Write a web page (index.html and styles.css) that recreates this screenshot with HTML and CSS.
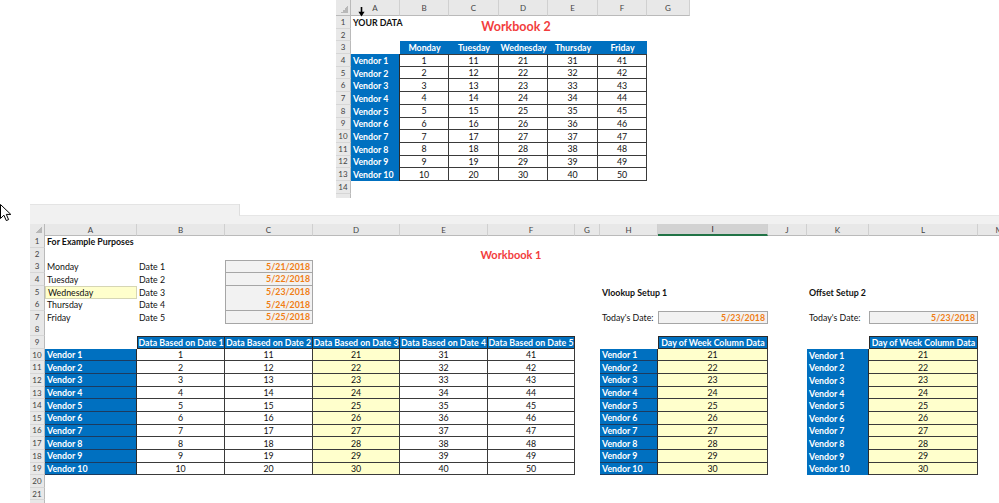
FILE: index.html
```html
<!DOCTYPE html>
<html lang="en">

<head>
    <meta charset="UTF-8">
    <meta name="viewport" content="width=device-width, initial-scale=1.0">
    <title>Workbook Lookup</title>
    <link rel="stylesheet" href="styles.css">
</head>

<body>
    <!-- Workbook 2: the source data -->
    <div class="sheet wb2">
        <svg class="colcursor" width="7" height="10" viewBox="0 0 7 10">
            <path d="M3.5 0 V6" stroke="#000" stroke-width="1.6" />
            <path d="M0.4 4.8 H6.6 L3.5 9.6 Z" fill="#000" />
        </svg>
        <div class="r hr">
            <div class="corner"></div>
            <div>A</div><div>B</div><div>C</div><div>D</div><div>E</div><div>F</div><div>G</div>
        </div>
        <div class="r"><div class="rn">1</div><div class="b">YOUR DATA</div><div></div><div class="title2"><span>Workbook 2</span></div></div>
        <div class="r"><div class="rn">2</div></div>
        <div class="r"><div class="rn">3</div><div></div><div class="hd">Monday</div><div class="hd">Tuesday</div><div class="hd">Wednesday</div><div class="hd">Thursday</div><div class="hd">Friday</div></div>
        <div class="r"><div class="rn">4</div><div class="vd">Vendor 1</div><div class="n t">1</div><div class="n t">11</div><div class="n t">21</div><div class="n t">31</div><div class="n t">41</div></div>
        <div class="r"><div class="rn">5</div><div class="vd">Vendor 2</div><div class="n">2</div><div class="n">12</div><div class="n">22</div><div class="n">32</div><div class="n">42</div></div>
        <div class="r"><div class="rn">6</div><div class="vd">Vendor 3</div><div class="n">3</div><div class="n">13</div><div class="n">23</div><div class="n">33</div><div class="n">43</div></div>
        <div class="r"><div class="rn">7</div><div class="vd">Vendor 4</div><div class="n">4</div><div class="n">14</div><div class="n">24</div><div class="n">34</div><div class="n">44</div></div>
        <div class="r"><div class="rn">8</div><div class="vd">Vendor 5</div><div class="n">5</div><div class="n">15</div><div class="n">25</div><div class="n">35</div><div class="n">45</div></div>
        <div class="r"><div class="rn">9</div><div class="vd">Vendor 6</div><div class="n">6</div><div class="n">16</div><div class="n">26</div><div class="n">36</div><div class="n">46</div></div>
        <div class="r"><div class="rn">10</div><div class="vd">Vendor 7</div><div class="n">7</div><div class="n">17</div><div class="n">27</div><div class="n">37</div><div class="n">47</div></div>
        <div class="r"><div class="rn">11</div><div class="vd">Vendor 8</div><div class="n">8</div><div class="n">18</div><div class="n">28</div><div class="n">38</div><div class="n">48</div></div>
        <div class="r"><div class="rn">12</div><div class="vd">Vendor 9</div><div class="n">9</div><div class="n">19</div><div class="n">29</div><div class="n">39</div><div class="n">49</div></div>
        <div class="r"><div class="rn">13</div><div class="vd">Vendor 10</div><div class="n">10</div><div class="n">20</div><div class="n">30</div><div class="n">40</div><div class="n">50</div></div>
        <div class="r"><div class="rn">14</div></div>
        <div class="r"><div class="rn"></div></div>
    </div>

    <div class="lower">
        <div class="gutter">
            <svg width="12" height="18" viewBox="0 0 12 18">
                <path d="M0.5 0.5 V14.5 L3.9 11.2 L6.3 16.6 L8.6 15.6 L6.3 10.4 H10.8 Z" fill="#fff" stroke="#000" stroke-width="1" stroke-linejoin="round" />
            </svg>
        </div>

        <!-- Workbook 1: lookup setups -->
        <div class="sheet wb1">
            <div class="bar">
                <div class="bar-l"></div>
                <div class="bar-r"><div class="blank"></div></div>
            </div>
            <div class="r hr">
                <div class="corner"></div>
                <div>A</div><div>B</div><div>C</div><div>D</div><div>E</div><div>F</div><div>G</div>
                <div>H</div><div class="sel">I</div><div>J</div><div>K</div><div>L</div><div class="edge">M</div>
            </div>
            <div class="r"><div class="rn">1</div><div class="b">For Example Purposes</div></div>
            <div class="r"><div class="rn">2</div><div></div><div></div><div></div><div></div><div class="title1"><span>Workbook 1</span></div></div>
            <div class="r"><div class="rn">3</div><div>Monday</div><div>Date 1</div><div class="dt t">5/21/2018</div></div>
            <div class="r"><div class="rn">4</div><div>Tuesday</div><div>Date 2</div><div class="dt">5/22/2018</div></div>
            <div class="r"><div class="rn">5</div><div class="wed">Wednesday</div><div>Date 3</div><div class="dt">5/23/2018</div><div></div><div></div><div></div><div></div><div class="b">Vlookup Setup 1</div><div></div><div></div><div class="b">Offset Setup 2</div></div>
            <div class="r"><div class="rn">6</div><div>Thursday</div><div>Date 4</div><div class="dt">5/24/2018</div></div>
            <div class="r"><div class="rn">7</div><div>Friday</div><div>Date 5</div><div class="dt">5/25/2018</div><div></div><div></div><div></div><div></div><div>Today's Date:</div><div class="dt t">5/23/2018</div><div></div><div>Today's Date:</div><div class="dt t">5/23/2018</div></div>
            <div class="r"><div class="rn">8</div></div>
            <div class="r"><div class="rn">9</div><div></div><div class="hd ln f">Data Based on Date 1</div><div class="hd ln">Data Based on Date 2</div><div class="hd ln">Data Based on Date 3</div><div class="hd ln">Data Based on Date 4</div><div class="hd ln">Data Based on Date 5</div><div></div><div></div><div class="hd ln f">Day of Week Column Data</div><div></div><div></div><div class="hd ln f">Day of Week Column Data</div></div>
            <div class="r"><div class="rn">10</div><div class="vd sep">Vendor 1</div><div class="n">1</div><div class="n">11</div><div class="n y">21</div><div class="n">31</div><div class="n">41</div><div></div><div class="vd sep">Vendor 1</div><div class="n y">21</div><div></div><div class="vd">Vendor 1</div><div class="n y">21</div></div>
            <div class="r"><div class="rn">11</div><div class="vd sep">Vendor 2</div><div class="n">2</div><div class="n">12</div><div class="n y">22</div><div class="n">32</div><div class="n">42</div><div></div><div class="vd sep">Vendor 2</div><div class="n y">22</div><div></div><div class="vd">Vendor 2</div><div class="n y">22</div></div>
            <div class="r"><div class="rn">12</div><div class="vd sep">Vendor 3</div><div class="n">3</div><div class="n">13</div><div class="n y">23</div><div class="n">33</div><div class="n">43</div><div></div><div class="vd sep">Vendor 3</div><div class="n y">23</div><div></div><div class="vd">Vendor 3</div><div class="n y">23</div></div>
            <div class="r"><div class="rn">13</div><div class="vd sep">Vendor 4</div><div class="n">4</div><div class="n">14</div><div class="n y">24</div><div class="n">34</div><div class="n">44</div><div></div><div class="vd sep">Vendor 4</div><div class="n y">24</div><div></div><div class="vd">Vendor 4</div><div class="n y">24</div></div>
            <div class="r"><div class="rn">14</div><div class="vd sep">Vendor 5</div><div class="n">5</div><div class="n">15</div><div class="n y">25</div><div class="n">35</div><div class="n">45</div><div></div><div class="vd sep">Vendor 5</div><div class="n y">25</div><div></div><div class="vd">Vendor 5</div><div class="n y">25</div></div>
            <div class="r"><div class="rn">15</div><div class="vd sep">Vendor 6</div><div class="n">6</div><div class="n">16</div><div class="n y">26</div><div class="n">36</div><div class="n">46</div><div></div><div class="vd sep">Vendor 6</div><div class="n y">26</div><div></div><div class="vd">Vendor 6</div><div class="n y">26</div></div>
            <div class="r"><div class="rn">16</div><div class="vd sep">Vendor 7</div><div class="n">7</div><div class="n">17</div><div class="n y">27</div><div class="n">37</div><div class="n">47</div><div></div><div class="vd sep">Vendor 7</div><div class="n y">27</div><div></div><div class="vd">Vendor 7</div><div class="n y">27</div></div>
            <div class="r"><div class="rn">17</div><div class="vd sep">Vendor 8</div><div class="n">8</div><div class="n">18</div><div class="n y">28</div><div class="n">38</div><div class="n">48</div><div></div><div class="vd sep">Vendor 8</div><div class="n y">28</div><div></div><div class="vd">Vendor 8</div><div class="n y">28</div></div>
            <div class="r"><div class="rn">18</div><div class="vd sep">Vendor 9</div><div class="n">9</div><div class="n">19</div><div class="n y">29</div><div class="n">39</div><div class="n">49</div><div></div><div class="vd sep">Vendor 9</div><div class="n y">29</div><div></div><div class="vd">Vendor 9</div><div class="n y">29</div></div>
            <div class="r"><div class="rn">19</div><div class="vd sep">Vendor 10</div><div class="n">10</div><div class="n">20</div><div class="n y">30</div><div class="n">40</div><div class="n">50</div><div></div><div class="vd sep">Vendor 10</div><div class="n y">30</div><div></div><div class="vd">Vendor 10</div><div class="n y">30</div></div>
            <div class="r"><div class="rn">20</div></div>
            <div class="r"><div class="rn">21</div></div>
            <div class="r"><div class="rn"></div></div>
        </div>
    </div>
</body>

</html>
```

FILE: styles.css
```css
body {
    margin: 0;
    width: 999px;
    height: 503px;
    overflow: hidden;
    background-color: #ffffff;
    color: #111111;
    font-family: Lato, "Liberation Sans", sans-serif;
    font-size: 8.8px;
}

.sheet {
    display: flex;
    flex-direction: column;
    overflow: hidden;
}

.wb2 {
    position: relative;
    margin-left: 336px;
    width: 354px;
    height: 198px;
}

.wb2 .r {
    grid-template-columns: 15px 49px 49px 50px 49px 50px 49px 43px;
    height: 12.7px;
}

.wb2 .hr {
    height: 16px;
}

.colcursor {
    position: absolute;
    left: 22px;
    top: 7px;
}

.lower {
    display: flex;
    margin-top: 6px;
}

.gutter {
    width: 30px;
    flex: none;
}

.wb1 {
    width: 969px;
    height: 299px;
}

.wb1 .r {
    grid-template-columns: 15px 92px 88px 88px 87px 88px 87px 25px 58px 110px 39px 62px 109px 40px;
    height: 12.65px;
}

.wb1 .hr {
    height: 11px;
}

.bar {
    display: flex;
    height: 20px;
    flex: none;
    background-color: #f1f1f1;
}

.bar-l {
    width: 209px;
    border-top: 1px solid #e4e4e4;
}

.bar-r {
    flex: 1;
}

.blank {
    height: 11px;
    background-color: #ffffff;
    border-left: 1px solid #dedede;
    border-bottom: 1px solid #e6e6e6;
}

/* rows and cells */
.r {
    display: grid;
    flex: none;
}

.r > div {
    display: flex;
    align-items: center;
    padding: 0 2px;
    min-width: 0;
    white-space: nowrap;
    box-sizing: border-box;
}

.hr > div {
    justify-content: center;
    background-color: #e8e8e8;
    color: #444444;
    font-size: 8px;
    border-right: 1px solid #d0d0d0;
    border-bottom: 1px solid #bababa;
}

.hr > .sel {
    background-color: #d2d2d2;
    color: #262626;
    border-bottom: 2px solid #217346;
}

.hr > .edge {
    justify-content: flex-end;
    padding-right: 14px;
}

.hr > .corner {
    background: #e8e8e8 linear-gradient(to bottom right, transparent 50%, #b8b8b8 50%) right 2px bottom 2px / 7px 7px no-repeat;
    border-right: 1px solid #bababa;
}

.rn {
    justify-content: center;
    background-color: #e8e8e8;
    color: #444444;
    font-size: 8px;
    border-right: 1px solid #bababa;
    border-bottom: 1px solid #d6d6d6;
}

.b {
    font-weight: bold;
}

.title2 {
    grid-column: span 3;
    justify-content: center;
    align-items: flex-end !important;
    padding-right: 17px !important;
    color: #f23d3d;
    font-weight: bold;
    font-size: 12.5px;
}

.title2 span {
    margin-bottom: -5px;
}

.title1 {
    grid-column: span 2;
    justify-content: center;
    padding-left: 49px !important;
    color: #f23d3d;
    font-weight: bold;
    font-size: 11px;
}

.hd {
    justify-content: center;
    background-color: #0070c0;
    color: #ffffff;
    font-weight: bold;
}

.hd.ln {
    border-top: 1px solid #2a2a2a;
    border-right: 1px solid #2a2a2a;
    border-bottom: 1px solid #2a2a2a;
}

.hd.f {
    border-left: 1px solid #2a2a2a;
}

.vd {
    background-color: #0070c0;
    color: #ffffff;
    font-weight: bold;
    border-right: 1px solid #2a2a2a;
}

.vd.sep {
    border-bottom: 1px solid #1d3b5e;
}

.n {
    justify-content: center;
    border-right: 1px solid #3a3a3a;
    border-bottom: 1px solid #3a3a3a;
}

.n.t {
    border-top: 1px solid #3a3a3a;
}

.y {
    background-color: #ffffcc;
}

.wed {
    background-color: #ffffcc;
    border: 1px solid #d6d6b4;
}

.dt {
    justify-content: flex-end;
    background-color: #f2f2f2;
    color: #f07d14;
    font-weight: bold;
    border: 1px solid #a6a6a6;
    border-top: none;
}

.dt.t {
    border-top: 1px solid #a6a6a6;
}
```
